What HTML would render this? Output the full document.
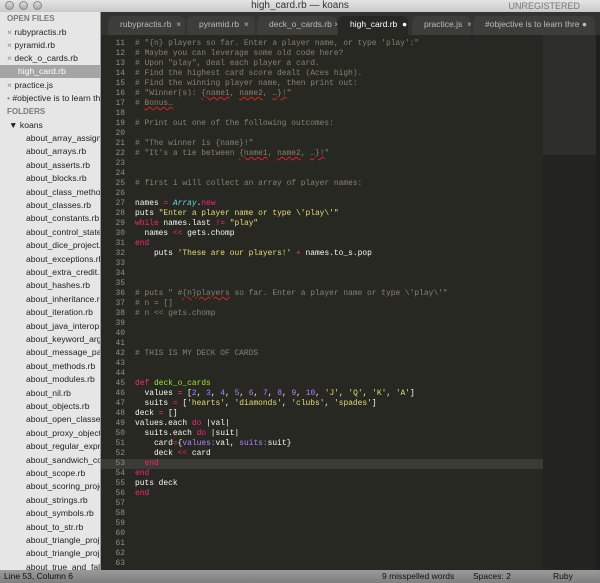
<!DOCTYPE html>
<html><head><meta charset="utf-8"><style>
*{margin:0;padding:0;box-sizing:border-box}
body{width:600px;height:583px;overflow:hidden;background:#272822;font-family:"Liberation Sans",sans-serif;position:relative}
#title{position:absolute;left:0;top:0;width:600px;height:12px;background:linear-gradient(#e4e4e4,#c9c9c9);font-size:10px;color:#333;text-align:center;line-height:12px;z-index:5}
#title .unreg{position:absolute;right:20px;top:0;color:#777;font-size:9px}
.dot{position:absolute;top:1px;width:9px;height:9px;border-radius:50%;background:linear-gradient(#ddd,#aaa);border:1px solid #888}
#side{position:absolute;left:0;top:12px;width:101px;height:558px;background:#e6e6e6;overflow:hidden;font-size:8.6px;color:#222;border-right:1px solid #999;z-index:5}
#side div{position:absolute;white-space:nowrap;line-height:12px}
.hd{color:#7a7a7a;font-weight:bold;left:7px;font-size:8px}
.sel{background:#a5a5a5;color:#fff;left:0;width:101px;padding-left:18px}
#tabs{position:absolute;left:101px;top:12px;width:499px;height:23px;background:#333331;z-index:4}
.tab{position:absolute;top:4px;height:19px;background:#3d3d3a;border-radius:6px 6px 0 0;color:#bbb;font-size:8.5px;line-height:17px;padding-left:12px;white-space:nowrap;overflow:hidden}
.tab.act{background:#272822;color:#fff}
#gut{position:absolute;left:101px;top:29px;width:24px;font-family:"Liberation Mono",monospace;font-size:7.9px;line-height:10px;color:#8f908a;text-align:right}
#code{position:absolute;left:135px;top:29px;font-family:"Liberation Mono",monospace;font-size:7.9px;line-height:10px;color:#f8f8f2;white-space:pre}
.c{color:#858270}.k{color:#f92672}.s{color:#e6db74}.n{color:#ae81ff}.f{color:#a6e22e}.t{color:#66d9ef;font-style:italic}
.u{text-decoration:underline wavy #d22;}
#mini{position:absolute;left:543px;top:35px;width:53px;height:535px;background:#232420}
#mini .v{position:absolute;left:0;top:0;width:53px;height:120px;background:#2e2f2a}
#status{position:absolute;left:0;top:570px;width:600px;height:13px;background:linear-gradient(#9a9a9a,#7f7f7f);font-size:8.5px;color:#111;line-height:13px;z-index:6}
#status span{position:absolute}
</style></head><body>
<div id="title"><span class="dot" style="left:5px"></span><span class="dot" style="left:19px"></span><span class="dot" style="left:33px"></span>high_card.rb — koans<span class="unreg">UNREGISTERED</span></div>
<div id="side">
<div class="hd" style="top:1px">OPEN FILES</div>
<div style="top:14px;left:7px"><span style="color:#888">×</span> rubypractis.rb</div>
<div style="top:27px;left:7px"><span style="color:#888">×</span> pyramid.rb</div>
<div style="top:40px;left:7px"><span style="color:#888">×</span> deck_o_cards.rb</div>
<div class="sel" style="top:53px;height:13px;line-height:13px">high_card.rb</div>
<div style="top:67px;left:7px"><span style="color:#888">×</span> practice.js</div>
<div style="top:80px;left:7px"><span style="color:#888">•</span> #objective is to learn the</div>
<div class="hd" style="top:94px">FOLDERS</div>
<div style="top:107px;left:9px">▼ koans</div>
<div style="top:120px;left:26px">about_array_assignm</div>
<div style="top:133.4px;left:26px">about_arrays.rb</div>
<div style="top:146.8px;left:26px">about_asserts.rb</div>
<div style="top:160.2px;left:26px">about_blocks.rb</div>
<div style="top:173.6px;left:26px">about_class_methods</div>
<div style="top:187px;left:26px">about_classes.rb</div>
<div style="top:200.4px;left:26px">about_constants.rb</div>
<div style="top:213.8px;left:26px">about_control_statem</div>
<div style="top:227.2px;left:26px">about_dice_project.rb</div>
<div style="top:240.6px;left:26px">about_exceptions.rb</div>
<div style="top:254px;left:26px">about_extra_credit.rb</div>
<div style="top:267.4px;left:26px">about_hashes.rb</div>
<div style="top:280.8px;left:26px">about_inheritance.rb</div>
<div style="top:294.2px;left:26px">about_iteration.rb</div>
<div style="top:307.6px;left:26px">about_java_interop.rb</div>
<div style="top:321px;left:26px">about_keyword_argu</div>
<div style="top:334.4px;left:26px">about_message_pass</div>
<div style="top:347.8px;left:26px">about_methods.rb</div>
<div style="top:361.2px;left:26px">about_modules.rb</div>
<div style="top:374.6px;left:26px">about_nil.rb</div>
<div style="top:388px;left:26px">about_objects.rb</div>
<div style="top:401.4px;left:26px">about_open_classes.r</div>
<div style="top:414.8px;left:26px">about_proxy_object_</div>
<div style="top:428.2px;left:26px">about_regular_expres</div>
<div style="top:441.6px;left:26px">about_sandwich_code</div>
<div style="top:455px;left:26px">about_scope.rb</div>
<div style="top:468.4px;left:26px">about_scoring_projec</div>
<div style="top:481.8px;left:26px">about_strings.rb</div>
<div style="top:495.2px;left:26px">about_symbols.rb</div>
<div style="top:508.6px;left:26px">about_to_str.rb</div>
<div style="top:522px;left:26px">about_triangle_proje</div>
<div style="top:535.4px;left:26px">about_triangle_proje</div>
<div style="top:548.8px;left:26px">about_true_and_false</div>
</div>
<div id="tabs">
<div class="tab" style="left:7px;width:77px">rubypractis.rb &nbsp;×</div>
<div class="tab" style="left:86px;width:68px">pyramid.rb &nbsp;×</div>
<div class="tab" style="left:156px;width:80px">deck_o_cards.rb ×</div>
<div class="tab act" style="left:237px;width:70px">high_card.rb &nbsp;●</div>
<div class="tab" style="left:311px;width:59px">practice.js &nbsp;×</div>
<div class="tab" style="left:372px;width:122px">#objective is to learn thre ●</div>
</div>
<div style="position:absolute;left:101px;top:459px;width:442px;height:10px;background:#3a3b35"></div>
<div id="gut">10<br>11<br>12<br>13<br>14<br>15<br>16<br>17<br>18<br>19<br>20<br>21<br>22<br>23<br>24<br>25<br>26<br>27<br>28<br>29<br>30<br>31<br>32<br>33<br>34<br>35<br>36<br>37<br>38<br>39<br>40<br>41<br>42<br>43<br>44<br>45<br>46<br>47<br>48<br>49<br>50<br>51<br>52<br>53<br>54<br>55<br>56<br>57<br>58<br>59<br>60<br>61<br>62<br>63</div>
<div id="code"><span class="c"> 
# "{n} players so far. Enter a player name, or type 'play':"
# Maybe you can leverage some old code here?
# Upon "play", deal each player a card.
# Find the highest card score dealt (Aces high).
# Find the winning player name, then print out:
# "Winner(s): <span class="u">{name1</span>, <span class="u">name2</span>, <span class="u">…}!</span>"
# <span class="u">Bonus…</span>

# Print out one of the following outcomes:

# "The winner is {name}!"
# "It's a tie between <span class="u">{name1</span>, <span class="u">name2</span>, <span class="u">…}!</span>"


# first i will collect an array of player names:
</span>
names <span class="k">=</span> <span class="t">Array</span>.<span class="k">new</span>
puts <span class="s">"Enter a player name or type \'play\'"</span>
<span class="k">while</span> names.last <span class="k">!=</span> <span class="s">"play"</span>
  names <span class="k">&lt;&lt;</span> gets.chomp
<span class="k">end</span>
    puts <span class="s">'These are our players!'</span> <span class="k">+</span> names.to_s.pop



<span class="c"># puts " #<span class="u">{n}players</span> so far. Enter a player name or type \'play\'"
# n = []
# n &lt;&lt; gets.chomp



# THIS IS MY DECK OF CARDS</span>


<span class="k">def</span> <span class="f">deck_o_cards</span>
  values <span class="k">=</span> [<span class="n">2</span>, <span class="n">3</span>, <span class="n">4</span>, <span class="n">5</span>, <span class="n">6</span>, <span class="n">7</span>, <span class="n">8</span>, <span class="n">9</span>, <span class="n">10</span>, <span class="s">'J'</span>, <span class="s">'Q'</span>, <span class="s">'K'</span>, <span class="s">'A'</span>]
  suits <span class="k">=</span> [<span class="s">'hearts'</span>, <span class="s">'diamonds'</span>, <span class="s">'clubs'</span>, <span class="s">'spades'</span>]
deck <span class="k">=</span> []
values.each <span class="k">do</span> |val|
  suits.each <span class="k">do</span> |suit|
    card<span class="k">=</span>{<span class="n">values:</span>val, <span class="n">suits:</span>suit}
    deck <span class="k">&lt;&lt;</span> card
  <span class="k">end</span>
<span class="k">end</span>
puts deck
<span class="k">end</span></div>
<div id="mini"><div class="v"></div></div>
<div style="position:absolute;left:596px;top:35px;width:4px;height:535px;background:#1e1e1c"></div>
<div id="status"><span style="left:4px">Line 53, Column 6</span><span style="left:382px">9 misspelled words</span><span style="left:473px">Spaces: 2</span><span style="left:553px">Ruby</span></div>
</body></html>
